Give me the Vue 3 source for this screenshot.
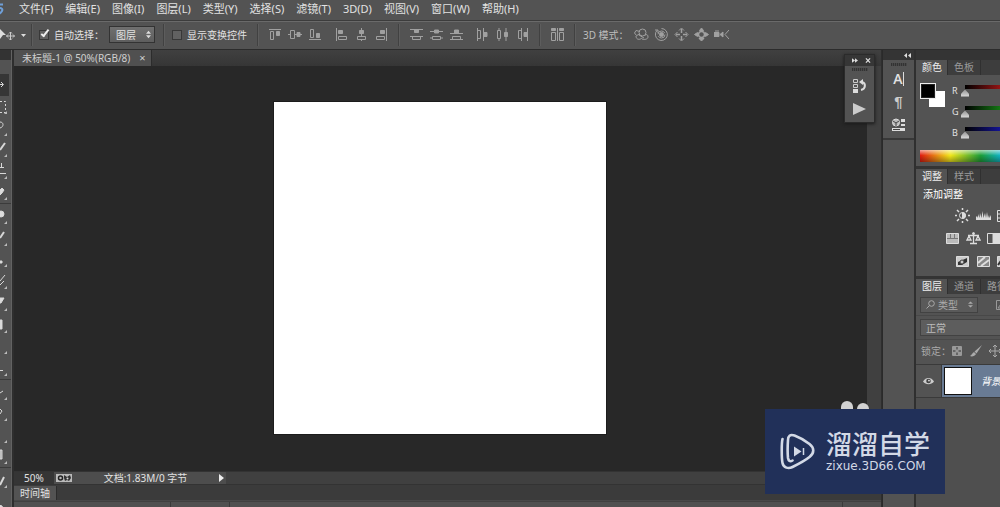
<script setup>
import { ref } from 'vue'

const menus = ['文件(F)', '编辑(E)', '图像(I)', '图层(L)', '类型(Y)', '选择(S)', '滤镜(T)', '3D(D)', '视图(V)', '窗口(W)', '帮助(H)']
const autoSelect = ref(true)
const showTransform = ref(false)
const target = ref('图层')

const alignGroups = [
  [
    { n: '顶边', d: '<path d="M1 2.500h12"/><path d="M2.500 4.500h3v8h-3z"/><path fill="#a0a0a0" d="M8.500 4.500h3v4h-3z"/>' },
    { n: '垂直居中', d: '<path d="M0 7.500h14"/><path fill="#535353" d="M2.500 3.500h4v8h-4z"/><path fill="#a0a0a0" d="M9 5.500h3v4H9z"/>' },
    { n: '底边', d: '<path d="M1 12.500h12"/><path d="M2.500 2.500h3v8h-3z"/><path fill="#a0a0a0" d="M8.500 6.500h3v4h-3z"/>' }
  ],
  [
    { n: '左边', d: '<path d="M2.500 1v13"/><path fill="#a0a0a0" d="M4.500 3.500h4v3h-4z"/><path d="M4.500 9.500h8v3h-8z"/>' },
    { n: '水平居中', d: '<path d="M7.500 1v13"/><path fill="#a0a0a0" d="M5.500 3.500h4v3h-4z"/><path fill="#535353" d="M3.500 9.500h8v3h-8z"/>' },
    { n: '右边', d: '<path d="M12.500 1v13"/><path fill="#a0a0a0" d="M6.500 3.500h4v3h-4z"/><path d="M2.500 9.500h8v3h-8z"/>' }
  ]
]
const distributeGroups = [
  [
    { n: '按顶分布', d: '<path d="M1 2.500h13M1 9.500h13"/><path fill="#a0a0a0" d="M5.500 3h4v2.500h-4z"/><path d="M3.500 9.500h8v3h-8z"/>' },
    { n: '按中分布', d: '<path d="M1 4.500h13M1 11h13"/><path fill="#a0a0a0" d="M5.500 3h4v3h-4z"/><path fill="#535353" d="M3.500 9.500h8v3h-8z"/>' },
    { n: '按底分布', d: '<path d="M1 6.500h13M1 12.500h13"/><path fill="#a0a0a0" d="M5.500 3h4v3h-4z"/><path d="M3.500 9.500h8v3h-8z"/>' }
  ],
  [
    { n: '按左分布', d: '<path d="M2.500 1v13M8.500 1v13"/><path d="M2.500 3.500h3v8h-3z"/><path fill="#a0a0a0" d="M9 5.500h3v4H9z"/>' },
    { n: '按水平分布', d: '<path d="M4 1v13M11 1v13"/><path fill="#535353" d="M2.500 3.500h3v8h-3z"/><path fill="#a0a0a0" d="M9.500 5.500h3v4h-3z"/>' },
    { n: '按右分布', d: '<path d="M6.500 1v13M12.500 1v13"/><path d="M3.500 3.500h3v8h-3z"/><path fill="#a0a0a0" d="M9 5.500h3v4H9z"/>' }
  ]
]
const modes = [
  { n: '旋转', d: '<circle cx="8.500" cy="5.500" r="3.500"/><path d="M6 4.500L2 3.500.500 6l2 2.500L6 7M2 9c0 4 4 4 6 2M8 12c3 1 6 0 6-2s-1-3-3-2M5 8l5 3"/>' },
  { n: '滚动', d: '<circle cx="7.500" cy="7.500" r="2" fill="#a0a0a0"/><circle cx="7.500" cy="7.500" r="3.500" stroke-dasharray="9 2"/><path d="M3.200 3.200A6 6 0 1 0 7.500 1.500M1 3h3v3"/>' },
  { n: '拖动', d: '<path stroke-width="1.500" d="M7.500 2v4M7.500 9v4M2 7.500h4M9 7.500h4"/><path d="M5 3.500l2.500-2.500L10 3.500M5 11.500L7.500 14l2.500-2.500M3.500 5L1 7.500 3.500 10M11.500 5L14 7.500 11.500 10"/>' },
  { n: '滑动', d: '<circle cx="7.500" cy="7.500" r="3" stroke-width="1.500"/><path fill="#a0a0a0" d="M5.500 3.500h4l-2-2.500zM5 11.500h5L7.500 14zM.500 7.500l3-2v4zM14.500 7.500l-3-2v4z"/>' },
  { n: '缩放', d: '<path fill="#a0a0a0" d="M0 5.500h5v4H0zM6 7.500L9 5v5zM1 4h4"/><path d="M15 3l-4 4.500 4 4.500"/>' }
]

const toolGroups = [
  { size: 'g6', tools: [
    { n: '移动', a: true, d: '<path d="M0 10.500h3M1 8l2.500 2.500L1 13"/>' },
    { n: '选框', d: '<path stroke-dasharray="2 2" d="M0 5.500h5.500v11H0"/>' },
    { n: '套索', d: '<path d="M0 5c4 0 4 5 0 6"/>' },
    { n: '快速选择', d: '<path stroke-width="2" d="M5 4L0 11"/>' },
    { n: '裁剪', d: '<path d="M0 7.500h4M0 13.500h6M1.500 3v4"/>' },
    { n: '吸管', d: '<path fill="#ddd" d="M0 8l2-2 2 2-2 3-2 2z"/>' }
  ] },
  { size: 'g8', tools: [
    { n: '修复', d: '<circle cx="1" cy="9" r="3" fill="#ddd"/>' },
    { n: '画笔', d: '<path stroke-width="2" d="M4 5L0 11"/>' },
    { n: '图章', d: '<path fill="#ddd" d="M0 12h2v2H0z"/>' },
    { n: '历史画笔', d: '<path d="M5 4L0 10M0 14l4-4"/>' },
    { n: '橡皮擦', d: '<path fill="#ddd" d="M0 6h4L1 11H0z"/>' },
    { n: '渐变', d: '<path fill="#ddd" d="M0 6h2v9H0z"/>' },
    { n: '模糊', d: '' },
    { n: '减淡', d: '<path d="M0 12.500h3"/>' }
  ] },
  { size: 'g4', tools: [
    { n: '钢笔', d: '<path d="M0 12l3-2"/>' },
    { n: '文字', d: '<path d="M0 6l2 2-2 3"/>' },
    { n: '路径选择', d: '' },
    { n: '矩形', d: '<path fill="#aaa" d="M0 4h2v9H0z"/>' }
  ] },
  { size: 'g2', tools: [
    { n: '抓手', d: '<path stroke-width="2" d="M4 7L0 15"/>' },
    { n: '缩放', d: '<circle cx="-1" cy="17" r="4" fill="#ddd"/>' }
  ] }
]

const channels = [
  { n: 'R', c: 'red' },
  { n: 'G', c: 'green' },
  { n: 'B', c: 'blue' }
]
const levels = ref([0, 0, 0])

const adjustments = [
  { row: 'r1', items: [
    { n: '亮度', d: '<circle cx="7.500" cy="7.500" r="3"/><path fill="#ddd" d="M7.500 4.500v6a3 3 0 0 0 0-6z"/><path stroke-width="1.500" d="M7.500 0v2M7.500 13v2M0 7.500h2M13 7.500h2M2 2l2 2M11 11l2 2M13 2l-2 2M2 13l2-2"/>' },
    { n: '色阶', d: '<path fill="#ddd" stroke="none" d="M0 12V9l1-1 1 2V6l1.500 4L4 5l1.500 5L6.500 3l1 7L9 5l1 5 1-6 1 6 1-3 .500 3 1.500-3v5z"/>' },
    { n: '曲线', d: '<path d="M.5 2.500h13v11H.5zM0 6h13M0 10h13"/>' }
  ] },
  { row: 'r2', items: [
    { n: '色相', d: '<path fill="#bbb" d="M1.500 2.500h12v10h-12z"/><path stroke="#777" d="M2 7.500h11M5.500 3v4M9.500 3v4"/>' },
    { n: '色彩平衡', d: '<path stroke-width="1.300" d="M7.500 2v10M4 12.500h7M2 4.500h11M3 5l-2 4h4zM12 5l-2 4h4z"/><circle cx="7.500" cy="2.500" r="1" fill="#ddd"/>' },
    { n: '黑白', d: '<path d="M.5 2.500h13v10H.5z"/><path fill="#ddd" d="M6 3h8v9H6z"/>' }
  ] },
  { row: 'r3', items: [
    { n: '反相', d: '<path fill="#ccc" d="M1.500 2.500h12v10h-12z"/><path stroke="none" fill="#333" d="M3 11V8l9-4v4l-5 3z"/><circle cx="7" cy="8" r="2" fill="#ccc" stroke="#444"/>' },
    { n: '色调分离', d: '<path fill="#888" d="M1.500 2.500h12v10h-12z"/><path stroke-width="2" d="M2 9l7-6M5 12l8-6"/>' },
    { n: '阈值', d: '<path fill="#ccc" d="M.5 2.500h13v10H.5z"/><path stroke="#333" stroke-width="2" d="M1 11l5-7"/>' }
  ] }
]
</script>

<template>
  <div class="app">
    <nav class="menubar">
      <svg class="brand" viewBox="0 0 4 12" aria-hidden="true"><path d="M3 1.500H-1M-2 5c4 0 5 1 4 3-1 2-3 3-5 2.500" fill="none" stroke="#6f9fd8" stroke-width="2" /></svg>
      <button v-for="m in menus" :key="m" class="menu">{{ m }}</button>
    </nav>

    <div class="options">
      <svg class="movetool" viewBox="0 0 28 16" aria-hidden="true">
        <path d="M0 2l6 6H3L0 12z" fill="#ddd" />
        <path d="M10.500 5v8M6.500 9h8M9 6.500l1.500-1.500L12 6.500M9 11.500l1.500 1.500 1.500-1.500M8 7.500L6.500 9 8 10.500M13 7.500L14.500 9 13 10.500" fill="none" stroke="#ccc" />
        <path d="M21 7h5l-2.500 3z" fill="#ddd" />
      </svg>
      <i class="sep"></i>
      <label class="check"><input v-model="autoSelect" type="checkbox" />自动选择：</label>
      <div class="picker">
        <select v-model="target" aria-label="自动选择目标">
          <option>图层</option>
          <option>组</option>
        </select>
        <svg viewBox="0 0 6 9" aria-hidden="true"><path d="M0 3.500L3 0l3 3.500zM0 5.500h6L3 9z" fill="#ddd" /></svg>
      </div>
      <i class="sep"></i>
      <label class="check second"><input v-model="showTransform" type="checkbox" />显示变换控件</label>
      <i class="sep"></i>
      <div v-for="(g, i) in alignGroups" :key="'a' + i" class="icons">
        <button v-for="b in g" :key="b.n" :aria-label="b.n"><svg viewBox="0 0 15 15" v-html="b.d"></svg></button>
      </div>
      <i class="sep"></i>
      <div v-for="(g, i) in distributeGroups" :key="'d' + i" class="icons">
        <button v-for="b in g" :key="b.n" :aria-label="b.n"><svg viewBox="0 0 15 15" v-html="b.d"></svg></button>
      </div>
      <i class="sep"></i>
      <div class="icons">
        <button aria-label="自动对齐">
          <svg viewBox="0 0 15 15"><path d="M1.500 5.500h4v8h-4zM9.500 5.500h4v8h-4zM7.500 1v13" /><path fill="#a0a0a0" d="M1.500 1.500h4v2h-4zM9.500 1.500h4v2h-4z" /></svg>
        </button>
      </div>
      <i class="sep"></i>
      <span class="modelabel">3D 模式：</span>
      <div class="icons modes">
        <button v-for="b in modes" :key="b.n" :aria-label="b.n"><svg viewBox="0 0 15 15" v-html="b.d"></svg></button>
      </div>
    </div>

    <div class="workspace">
      <aside class="toolbar">
        <div class="toolhead"></div>
        <div v-for="g in toolGroups" :key="g.size" class="toolgroup" :class="g.size">
          <button v-for="t in g.tools" :key="t.n" :aria-label="t.n" :class="{ active: t.a }">
            <svg viewBox="0 0 9 21" v-html="t.d"></svg>
          </button>
        </div>
      </aside>

      <main class="document">
        <div class="tabs">
          <div class="tab">未标题-1 @ 50%(RGB/8)<button aria-label="关闭">×</button></div>
        </div>
        <div class="stage">
          <div class="scroller"><div class="paper"></div></div>
          <div class="scrollbar"></div>
          <div class="floating">
            <div class="floathead">
              <svg viewBox="0 0 8 6"><path d="M0 0l4 3-4 3zM4 0l4 3-4 3z" fill="#ddd" /></svg>
              <svg viewBox="0 0 6 6"><path d="M.5.5l5 5M5.500.5l-5 5" stroke="#ddd" stroke-width="1.500" /></svg>
            </div>
            <i class="grip"></i>
            <button aria-label="历史记录">
              <svg viewBox="0 0 15 16"><path d="M1.500 1.500h4v3h-4zM1.500 6.500h4v3h-4z" fill="none" stroke="#ccc" /><path d="M1 11h5v4H1z" fill="#ddd" /><path d="M9 12c5-1 5-7 1-8" fill="none" stroke="#ddd" stroke-width="2" /><path d="M7 4l4-3v6z" fill="#ddd" /></svg>
            </button>
            <button aria-label="动作">
              <svg viewBox="0 0 15 16"><path d="M1 2l13 6-13 6z" fill="#ccc" /></svg>
            </button>
          </div>
        </div>
        <div class="status">
          <input class="zoom" type="text" value="50%" aria-label="缩放比例" />
          <div class="info">
            <svg class="bridge" viewBox="0 0 16 8" aria-hidden="true"><path d="M0 0h16v8H0z" fill="#bbb" /><circle cx="4.500" cy="4" r="2" fill="#bbb" stroke="#222" stroke-width="1.500" /><path d="M8 1l3 2 3-2 1 3-2 3-2-1-2 1-1-3z" fill="#333" /><circle cx="11.500" cy="4.500" r="1" fill="#ddd" /></svg>
            <span>文档:1.83M/0 字节</span>
            <button aria-label="状态选项"><svg viewBox="0 0 5 8"><path d="M0 0l5 4-5 4z" fill="#eee" /></svg></button>
          </div>
        </div>
        <div class="timeline">
          <div class="tltabs"><button>时间轴</button></div>
          <div class="tlbody"><i></i><i></i><i></i></div>
        </div>
      </main>

      <aside class="dock">
        <div class="dockhead"></div>
        <div class="dockbox">
          <i class="grip"></i>
          <button aria-label="字符"><b class="letter">A</b><i class="bar"></i></button>
          <button aria-label="段落"><span class="pilcrow">¶</span></button>
          <button aria-label="属性">
            <svg viewBox="0 0 14 14"><circle cx="4" cy="4.500" r="3.500" fill="#bbb" stroke="#ddd" /><path d="M1 3l3 2 3-2M4 5v3" stroke="#444" fill="none" /><path d="M9 1h4v3H9zM9 6h4v2H9zM0 10h13v3H0z" fill="#ddd" /><path d="M1 11.500h7" stroke="#444" /></svg>
          </button>
        </div>
      </aside>

      <aside class="panels">
        <div class="panelhead"><svg viewBox="0 0 7 5"><path d="M3 0v5L0 2.500zM7 0v5L4 2.500z" fill="#ddd" /></svg></div>
        <section class="color">
          <div class="ptabs"><button class="on">颜色</button><button>色板</button></div>
          <div class="colorbody">
            <div class="swatches"><i class="back"></i><i class="fore"></i></div>
            <div class="sliders">
              <label v-for="(c, i) in channels" :key="c.n">
                <span>{{ c.n }}</span>
                <input v-model.number="levels[i]" type="range" min="0" max="255" :class="c.c" />
              </label>
            </div>
          </div>
          <div class="spectrum"></div>
        </section>
        <section class="adjust">
          <div class="ptabs"><button class="on">调整</button><button>样式</button></div>
          <p>添加调整</p>
          <div v-for="r in adjustments" :key="r.row" class="adjrow" :class="r.row">
            <button v-for="b in r.items" :key="b.n" :aria-label="b.n"><svg viewBox="0 0 15 15" v-html="b.d"></svg></button>
          </div>
        </section>
        <section class="layers">
          <div class="ptabs"><button class="on">图层</button><button>通道</button><button>路径</button></div>
          <div class="filter">
            <button class="kind">
              <svg viewBox="0 0 9 9"><circle cx="5.500" cy="3.500" r="2.800" /><path d="M3.500 5.500L.5 8.500" /></svg>
              类型
              <svg class="updown" viewBox="0 0 6 7"><path d="M0 2.500L3 0l3 2.500zM0 4.500h6L3 7z" /></svg>
            </button>
            <svg class="pic" viewBox="0 0 10 10"><path d="M.5.5h9v9h-9zM2 8l3-4 3 4z" /></svg>
          </div>
          <div class="blend">
            <select aria-label="混合模式"><option>正常</option><option>溶解</option></select>
          </div>
          <div class="lock">
            <span>锁定：</span>
            <button aria-label="锁定透明像素"><svg viewBox="0 0 12 12"><path d="M1.500 1.500h9v9h-9z" fill="#666" stroke="#999" /><path d="M2 2h3v3H2zM7 2h3v3H7zM4.500 4.500h3v3h-3zM2 7h3v3H2zM7 7h3v3H7z" fill="#999" /></svg></button>
            <button aria-label="锁定图像像素"><svg viewBox="0 0 12 12"><path d="M12 0L6.500 8.500 4.500 6.500zM4 7l2 2c-1 2-4 3-6 2 2-1 2-3 4-4z" fill="#aaa" /></svg></button>
            <button aria-label="锁定位置"><svg viewBox="0 0 12 12"><path d="M6 0v12M0 6h12M4 2l2-2 2 2M4 10l2 2 2-2M2 4L0 6l2 2M10 4l2 2-2 2" fill="none" stroke="#aaa" /></svg></button>
          </div>
          <div class="layer">
            <button class="eye" aria-label="可见性"><svg viewBox="0 0 12 8"><path d="M0 4.500C3-.5 9-.5 12 4.500 9 8.500 3 8.500 0 4.500z" fill="#ccc" /><circle cx="6" cy="4" r="2.500" fill="#444" /><circle cx="6.500" cy="3.500" r="1" fill="#ddd" /></svg></button>
            <div class="layerbody"><i class="thumb"></i><em>背景</em></div>
          </div>
        </section>
      </aside>
    </div>

    <div class="badge">
      <i class="ear left"></i><i class="ear right"></i>
      <div class="badgebox">
        <svg class="logo" viewBox="0 0 36 38" aria-hidden="true">
          <g fill="none" stroke="#d3d9e6" stroke-width="2.600" stroke-linecap="round" stroke-linejoin="round">
            <path d="M2.500 6C1.500 10 1.500 25 2.500 30c1 5 6 6 10 4 6-3 12-6 17-10 5-4 5-9 0-13-5-4-11-7-15-8.500C10 1 8 3 8 7c-.500 7-.500 13 0 18 .500 3 2 4 4.500 2.500" />
          </g>
          <path d="M14 13.500l7.500 5-7.500 5z" fill="#d3d9e6" />
          <path d="M23.500 15v7" stroke="#d3d9e6" stroke-width="1.500" />
        </svg>
        <div class="words"><strong>溜溜自学</strong><span>zixue.3D66.COM</span></div>
      </div>
    </div>
  </div>
</template>

<style>
body { margin: 0; background: #535353; }
</style>

<style scoped>
.app {
  position: relative;
  display: flex;
  flex-direction: column;
  height: 100vh;
  overflow: hidden;
  background: #535353;
  color: #e2e2e2;
  font: 10px/14px "Noto Sans", "Noto Sans CJK SC", sans-serif;
  white-space: nowrap;
}
.app *, .app *::before { box-sizing: border-box; }
button, input, select { margin: 0; padding: 0; border: 0; background: none; color: inherit; font: inherit; border-radius: 0; }
svg { display: block; }

.menubar { position: relative; display: flex; align-items: center; gap: 12px; height: 21px; padding: 0 0 3px 19px; border-bottom: 1px solid #3c3c3c; flex: none; font-size: 11px; }
.brand { position: absolute; left: 0; top: 3px; width: 4px; height: 12px; }

.options { display: flex; align-items: center; height: 29px; flex: none; border-top: 1px solid #6a6a6a; border-bottom: 1px solid #2c2c2c; padding-bottom: 2px; }
.movetool { width: 28px; height: 16px; }
.sep { flex: none; width: 2px; height: 22px; margin: 0 7px 0 4px; border-left: 1px solid #414141; border-right: 1px solid #5d5d5d; }
.movetool + .sep { margin: 0 6px 0 3px; }
.check { display: flex; align-items: center; gap: 5px; }
.check.second { margin-right: 6px; }
.check input { appearance: none; position: relative; width: 10px; height: 10px; background: #616161; border: 1px solid #383838; }
.check input:checked::before { content: ""; position: absolute; left: 3px; top: -3px; width: 4px; height: 9px; border: solid #eee; border-width: 0 2px 2px 0; transform: rotate(38deg); }
.picker { position: relative; margin: 0 4px 0 5px; }
.picker select { appearance: none; display: block; width: 46px; height: 17px; padding-left: 6px; border: 1px solid #333; background: linear-gradient(#707070, #5e5e5e); }
.picker svg { position: absolute; right: 4px; top: 4px; width: 5px; height: 9px; pointer-events: none; }
.icons { display: flex; gap: 5px; margin: 0 5px 0 2px; }
.icons + .icons { margin-left: 6px; }
.icons svg { width: 15px; height: 15px; fill: none; stroke: #a0a0a0; }
.modelabel { color: #bdbdbd; }
.icons.modes { margin-left: 5px; }

.workspace { display: flex; flex: 1; min-height: 0; background: #2e2e2e; }
.toolbar { flex: none; width: 12px; background: #535353; border-right: 1px solid #626262; overflow: hidden; margin-right: 2px; }
.toolhead { height: 24px; border-top: 10px solid #333; }
.toolgroup { display: flex; flex-direction: column; border-bottom: 1px solid #3b3b3b; margin-bottom: 1px; }
.toolgroup button { position: relative; flex: 1; min-height: 0; }
.toolgroup svg { width: 9px; height: 21px; fill: none; stroke: #d8d8d8; }
.toolgroup button::before { content: ""; position: absolute; right: 4px; bottom: 3px; border-left: 3px solid transparent; border-bottom: 3px solid #bbb; }
.toolgroup .active { background: #363636; width: 9px; }
.toolgroup .active::before { display: none; }
.g6 { height: 130px; }
.g8 { height: 175px; }
.g4 { height: 87px; }
.g2 { height: 44px; border: 0; }

.document { flex: 1; min-width: 0; display: flex; flex-direction: column; }
.tabs { height: 16px; display: flex; background: linear-gradient(#404040, #363636); flex: none; }
.tab { display: flex; align-items: center; gap: 9px; padding: 0 5px 0 8px; background: #505050; color: #cfcfcf; border-right: 1px solid #2c2c2c; }
.tab button { font-size: 11px; line-height: 12px; }
.stage { position: relative; display: flex; flex: 1; min-height: 0; background: #282828; }
.scroller { flex: 1; display: flex; justify-content: center; align-items: center; padding: 0 2px 1px 0; }
.paper { width: 332px; aspect-ratio: 1; background: #fff; outline: 1px solid #1c1c1c; }
.scrollbar { width: 14px; background: #404040; }
.floating { position: absolute; right: 6px; top: -12px; width: 31px; height: 69px; background: #535353; border: 1px solid #2b2b2b; display: flex; flex-direction: column; align-items: center; gap: 7px; box-shadow: 0 1px 3px #1a1a1a; }
.floathead { width: 100%; height: 11px; flex: none; background: #363636; display: flex; align-items: center; justify-content: space-between; padding: 0 3px 0 7px; }
.floathead svg { width: 6px; height: 5px; }
.grip { display: block; flex: none; width: 16px; height: 3px; background: repeating-linear-gradient(90deg, #333 0 1px, #484848 1px 2px); }
.floating .grip { margin-top: -5px; }
.floating button svg { width: 15px; height: 16px; }
.status { display: flex; height: 14px; flex: none; background: #404040; border-top: 1px solid #333; border-bottom: 1px solid #333; }
.zoom { width: 40px; padding-left: 10px; background: #353535; }
.info { display: flex; align-items: center; width: 172px; padding: 0 2px; background: #4d4d4d; }
.bridge { width: 16px; height: 8px; }
.info span { flex: 1; text-align: center; }
.info button svg { width: 5px; height: 8px; }
.timeline { flex: none; height: 22px; background: #535353; }
.tltabs { display: flex; height: 16px; padding-top: 1px; background: #3b3b3b; border-bottom: 1px solid #484848; }
.tltabs button { padding: 0 6px; background: #535353; border-right: 1px solid #2c2c2c; }
.tlbody { display: flex; height: 6px; border-top: 1px solid #404040; background: #505050; }
.tlbody i { width: 59px; border-right: 1px solid #3a3a3a; }
.tlbody i:first-child { width: 157px; }
.tlbody i:last-child { width: 613px; }

.dock { flex: none; width: 34px; margin-left: 1px; background: #535353; border-left: 1px solid #2a2a2a; border-right: 2px solid #2f2f2f; }
.dockhead { height: 10px; background: #343434; }
.dockbox { height: 80px; display: flex; flex-direction: column; align-items: center; padding-top: 3px; border-bottom: 2px solid #383838; }
.dockbox button { display: flex; align-items: center; justify-content: center; height: 23px; width: 24px; }
.dockbox .grip { margin-bottom: 1px; }
.letter { font: 600 14px/16px "Open Sans", sans-serif; }
.bar { width: 1px; height: 14px; background: #ddd; }
.pilcrow { font: bold 15px/16px "Liberation Sans", sans-serif; color: #ccc; }
.dockbox svg { width: 14px; height: 14px; }

.panels { flex: none; width: 84px; background: #4f4f4f; overflow: hidden; }
.panelhead { height: 10px; background: #343434; }
.panelhead svg { position: absolute; margin: 3px 0 0 -12px; width: 7px; height: 5px; }
section { background: #535353; border-bottom: 3px solid #343434; overflow: hidden; }
.ptabs { display: flex; height: 15px; background: #3d3d3d; }
.ptabs button { flex: none; padding: 0 6px 1px; border-right: 1px solid #303030; color: #9a9a9a; }
.ptabs .on { background: #535353; color: #eee; padding-right: 5px; }
.color { height: 109px; }
.colorbody { display: flex; height: 74px; padding: 7px 0 0 4px; }
.swatches { position: relative; flex: none; width: 32px; }
.fore, .back { position: absolute; width: 16px; height: 16px; }
.fore { left: 0; top: 1px; background: #000; border: 1px solid #eee; outline: 1px solid #222; outline-offset: -2px; }
.back { left: 9px; top: 9px; background: #fff; }
.sliders { display: flex; flex-direction: column; }
.sliders label { display: flex; height: 21px; font-size: 9px; }
.sliders span { width: 8px; line-height: 17px; }
.sliders input { appearance: none; width: 76px; height: 17px; overflow: hidden; }
.sliders input::-webkit-slider-runnable-track { height: 12px; background: linear-gradient(90deg, #000, var(--c) 80%) 5px 0 / 100% 4px no-repeat; }
.sliders input::-webkit-slider-thumb { appearance: none; width: 8px; height: 7px; margin: 5px 0 0 1px; background: linear-gradient(#999, #ddd); clip-path: polygon(50% 0, 100% 60%, 100% 100%, 0 100%, 0 60%); }
.red { --c: #f22; }
.green { --c: #2c2; }
.blue { --c: #22f; }
.spectrum { height: 12px; width: 190px; margin: 1px 0 0 4px; background: linear-gradient(#fff9, #fff0 45%, #0005), linear-gradient(90deg, #e01b10, #f1e61a 16%, #1c9e38 32%, #10b5cf 43%, #1a35d0 60%, #d018c0 80%, #e01b10); }
.adjust { height: 110px; }
.adjust p { margin: 3px 0 7px 7px; color: #fff; }
.adjrow { display: flex; gap: 6px; width: max-content; margin-bottom: 8px; }
.adjrow svg { width: 15px; height: 15px; fill: none; stroke: #ddd; }
.r1 { margin-left: 39px; }
.r2 { margin-left: 29px; }
.r3 { margin-left: 39px; }
.layers { border-bottom: 1px solid #3a3a3a; }
.filter { display: flex; align-items: center; gap: 18px; height: 22px; padding-left: 4px; border-bottom: 1px solid #484848; }
.kind { flex: none; display: flex; align-items: center; gap: 3px; width: 58px; height: 16px; padding: 0 4px 0 5px; border: 1px solid #424242; background: #5a5a5a; color: #aaa; }
.kind svg { width: 9px; height: 9px; fill: none; stroke: #aaa; }
.kind .updown { width: 5px; height: 7px; margin-left: auto; fill: #aaa; stroke: none; }
.pic { flex: none; width: 10px; height: 10px; fill: none; stroke: #999; }
.blend { height: 24px; padding: 3px 0 3px 4px; border-bottom: 1px solid #484848; }
.blend select { appearance: none; display: block; width: 130px; height: 17px; padding-left: 5px; border: 1px solid #424242; background: #5d5d5d; color: #bbb; }
.lock { display: flex; align-items: center; gap: 7px; height: 24px; padding: 0 0 2px 5px; color: #aaa; }
.lock span { width: 23px; }
.lock svg { width: 12px; height: 12px; }
.layer { display: flex; height: 33px; border-top: 1px solid #3a3a3a; }
.eye { flex: none; display: flex; align-items: center; justify-content: center; width: 26px; border-right: 1px solid #3c3c3c; }
.eye svg { width: 11px; height: 8px; }
.layerbody { display: flex; align-items: center; gap: 9px; flex: 1; padding-left: 2px; background: #697b94; color: #fff; }
.thumb { flex: none; width: 28px; height: 28px; background: #fff; border: 1px solid #111; }

.badge { position: absolute; right: 55px; bottom: 13px; width: 180px; height: 85px; }
.badgebox { position: relative; display: flex; align-items: center; gap: 10px; height: 100%; padding-left: 15px; background: #213059; color: #d3d9e6; }
.logo { width: 36px; height: 38px; flex: none; }
.words { display: flex; flex-direction: column; padding-bottom: 2px; }
.words strong { font: 500 26px/32px "Noto Sans CJK SC", sans-serif; }
.words span { font: 12px/15px "DejaVu Sans", sans-serif; }
.ear { position: absolute; width: 12px; height: 16px; border-radius: 6px; background: #d2d2d2; }
.ear.left { left: 76px; top: -8px; }
.ear.right { left: 92px; top: -6px; }
</style>
